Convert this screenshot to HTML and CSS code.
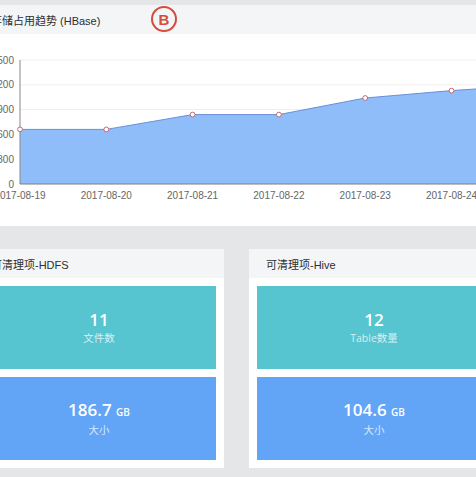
FILE: index.html
```html
<!DOCTYPE html>
<html lang="zh">
<head>
<meta charset="utf-8">
<link rel="stylesheet" href="styles.css">
</head>
<body>
<div class="page">
  <section class="card card-wide">
    <header class="card-head">存储占用趋势 (HBase)</header>
    <div class="chart-body">
      <svg class="chart" width="526" height="192" viewBox="-26 0 526 192">
        <g class="grid">
          <line x1="20" y1="26" x2="500" y2="26"/>
          <line x1="20" y1="50.8" x2="500" y2="50.8"/>
          <line x1="20" y1="75.6" x2="500" y2="75.6"/>
          <line x1="20" y1="100.4" x2="500" y2="100.4"/>
          <line x1="20" y1="125.2" x2="500" y2="125.2"/>
        </g>
        <path class="area" d="M20 95.4 L106.3 95.4 L192.6 80.6 L278.9 80.6 L365.2 64 L451.5 56.6 L537.8 50.8 L537.8 150 L20 150 Z"/>
        <path class="line" d="M20 95.4 L106.3 95.4 L192.6 80.6 L278.9 80.6 L365.2 64 L451.5 56.6 L537.8 50.8"/>
        <line class="axis-y" x1="20" y1="26" x2="20" y2="150"/>
        <line class="axis-x" x1="20" y1="150" x2="500" y2="150"/>
        <g class="dots">
          <circle cx="20" cy="95.4" r="2.4"/>
          <circle cx="106.3" cy="95.4" r="2.4"/>
          <circle cx="192.6" cy="80.6" r="2.4"/>
          <circle cx="278.9" cy="80.6" r="2.4"/>
          <circle cx="365.2" cy="64" r="2.4"/>
          <circle cx="451.5" cy="56.6" r="2.4"/>
        </g>
        <g class="ylab">
          <text x="14" y="29.5">1500</text>
          <text x="14" y="54.3">1200</text>
          <text x="14" y="79.1">900</text>
          <text x="14" y="103.9">600</text>
          <text x="14" y="128.7">300</text>
          <text x="14" y="153.5">0</text>
        </g>
        <g class="xlab">
          <text x="20" y="165">2017-08-19</text>
          <text x="106.3" y="165">2017-08-20</text>
          <text x="192.6" y="165">2017-08-21</text>
          <text x="278.9" y="165">2017-08-22</text>
          <text x="365.2" y="165">2017-08-23</text>
          <text x="451.5" y="165">2017-08-24</text>
        </g>
      </svg>
    </div>
    <div class="badge">B</div>
  </section>

  <div class="row">
    <section class="card card-half">
      <header class="card-head">可清理项-HDFS</header>
      <div class="tiles">
        <div class="tile teal">
          <div class="num">11</div>
          <div class="lbl">文件数</div>
        </div>
        <div class="tile blue">
          <div class="num">186.7 <span class="unit">GB</span></div>
          <div class="lbl">大小</div>
        </div>
      </div>
    </section>
    <section class="card card-half">
      <header class="card-head">可清理项-Hive</header>
      <div class="tiles">
        <div class="tile teal">
          <div class="num">12</div>
          <div class="lbl">Table数量</div>
        </div>
        <div class="tile blue">
          <div class="num">104.6 <span class="unit">GB</span></div>
          <div class="lbl">大小</div>
        </div>
      </div>
    </section>
  </div>
</div>
</body>
</html>
```

FILE: styles.css
```css
html, body {
  margin: 0;
  padding: 0;
}
body {
  background: #e4e6e8;
  overflow: hidden;
  width: 476px;
  height: 477px;
  font-family: "Open Sans", "Noto Sans CJK SC", sans-serif;
}
.page {
  margin-left: -26px;
  width: 526px;
  padding-top: 5px;
  display: flex;
  flex-direction: column;
  gap: 23px;
}
.card {
  background: #ffffff;
  position: relative;
}
.card-head {
  height: 29px;
  background: #f4f5f6;
  padding-left: 17px;
  display: flex;
  align-items: center;
  font-size: 11px;
  color: #2e2e2e;
  font-family: "Liberation Sans", "Noto Sans CJK SC", sans-serif;
}
.chart-body {
  height: 192px;
}
.chart {
  display: block;
}
.grid line {
  stroke: #efefef;
  stroke-width: 1;
}
.area {
  fill: #8fbdfa;
}
.line {
  fill: none;
  stroke: #6b8fd8;
  stroke-width: 1;
}
.axis-y {
  stroke: #8e8585;
  stroke-width: 1;
}
.axis-x {
  stroke: #7d7d7d;
  stroke-width: 1;
}
.dots circle {
  fill: #ffffff;
  stroke: #c46a72;
  stroke-width: 1;
}
.ylab text {
  font-family: "Liberation Sans", sans-serif;
  font-size: 10px;
  fill: #666;
  text-anchor: end;
}
.xlab text {
  font-family: "Liberation Sans", sans-serif;
  font-size: 10px;
  fill: #666;
  text-anchor: middle;
}
.badge {
  position: absolute;
  left: 177px;
  top: 1px;
  width: 22px;
  height: 22px;
  border: 2px solid #d64b3c;
  border-radius: 50%;
  color: #d64b3c;
  font-family: "Liberation Sans", sans-serif;
  font-weight: bold;
  font-size: 15px;
  display: flex;
  align-items: center;
  justify-content: center;
}
.row {
  display: flex;
  gap: 25px;
}
.card-half {
  width: 250px;
}
.tiles {
  padding: 8px;
  display: flex;
  flex-direction: column;
  gap: 8px;
}
.tile {
  height: 83px;
  display: flex;
  flex-direction: column;
  align-items: center;
  justify-content: center;
  color: #fff;
}
.teal {
  background: #56c5d0;
}
.blue {
  background: #62a5f7;
}
.num {
  font-size: 17px;
  font-weight: 600;
  line-height: 20px;
}
.unit {
  font-size: 10px;
  font-weight: 600;
}
.lbl {
  font-size: 10.5px;
  line-height: 16px;
  color: rgba(255, 255, 255, 0.75);
  font-family: "Open Sans", "Noto Sans CJK SC", sans-serif;
}
```
